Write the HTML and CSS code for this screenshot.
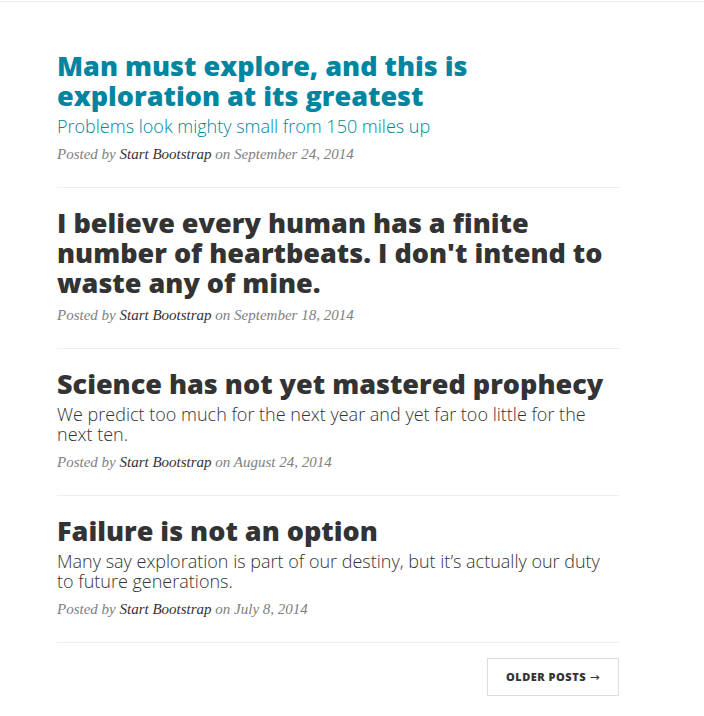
FILE: index.html
```html
<!DOCTYPE html>
<html>
<head>
<meta charset="utf-8">
<link rel="stylesheet" href="styles.css">
</head>
<body>
<div class="topbar"></div>
<main class="container">
  <div class="post-preview first">
    <a href="#" class="post-link active">
      <h2 class="post-title">Man must explore, and this is exploration at its greatest</h2>
      <h3 class="post-subtitle">Problems look mighty small from 150 miles up</h3>
    </a>
    <p class="post-meta">Posted by <a href="#">Start Bootstrap</a> on September 24, 2014</p>
  </div>
  <hr class="divider">
  <div class="post-preview">
    <a href="#" class="post-link">
      <h2 class="post-title">I believe every human has a finite number of heartbeats. I don't intend to waste any of mine.</h2>
    </a>
    <p class="post-meta">Posted by <a href="#">Start Bootstrap</a> on September 18, 2014</p>
  </div>
  <hr class="divider">
  <div class="post-preview">
    <a href="#" class="post-link">
      <h2 class="post-title">Science has not yet mastered prophecy</h2>
      <h3 class="post-subtitle">We predict too much for the next year and yet far too little for the next ten.</h3>
    </a>
    <p class="post-meta">Posted by <a href="#">Start Bootstrap</a> on August 24, 2014</p>
  </div>
  <hr class="divider">
  <div class="post-preview">
    <a href="#" class="post-link">
      <h2 class="post-title">Failure is not an option</h2>
      <h3 class="post-subtitle">Many say exploration is part of our destiny, but it’s actually our duty to future generations.</h3>
    </a>
    <p class="post-meta">Posted by <a href="#">Start Bootstrap</a> on July 8, 2014</p>
  </div>
  <hr class="divider">
  <div class="pager">
    <a href="#" class="btn-older">Older Posts <span class="arrow">&rarr;</span></a>
  </div>
</main>
</body>
</html>
```
FILE: styles.css
```css
html, body {
  margin: 0;
  padding: 0;
  background: #fff;
}
body {
  font-family: "Open Sans", "Liberation Sans", sans-serif;
  color: #333;
}
.topbar {
  height: 1px;
  border-bottom: 1px solid #eeeeee;
}
.container {
  width: 562px;
  padding-left: 57px;
  padding-bottom: 20px;
}
.post-preview {
  padding-top: 20px;
}
.post-preview.first {
  padding-top: 49px;
}
.post-link {
  color: #333;
  text-decoration: none;
  display: block;
}
.post-link.active {
  color: #0085a1;
}
.post-title {
  font-size: 27px;
  line-height: 30px;
  font-weight: 800;
  margin: 0 0 5px;
}
.post-title:last-child {
  margin-bottom: 6px;
}
.post-subtitle {
  font-size: 18px;
  line-height: 20px;
  font-weight: 300;
  margin: 0 0 7px;
}
.post-meta {
  font-family: "Liberation Serif", serif;
  font-style: italic;
  font-size: 15px;
  line-height: 22px;
  color: #808080;
  margin: 0 0 22px;
}
.post-meta a {
  color: #333;
  text-decoration: none;
}
.divider {
  border: 0;
  border-top: 1px solid #eeeeee;
  margin: 0;
  height: 0;
}
.pager {
  display: flex;
  justify-content: flex-end;
  padding-top: 15px;
}
.btn-older {
  display: block;
  box-sizing: border-box;
  width: 132px;
  height: 38px;
  line-height: 36px;
  border: 1px solid #dddddd;
  text-align: center;
  font-size: 11px;
  font-weight: 800;
  letter-spacing: 0.5px;
  text-transform: uppercase;
  color: #333;
  text-decoration: none;
}
.arrow {
  font-family: "DejaVu Sans", sans-serif;
  font-weight: 400;
  font-size: 12px;
}
```
